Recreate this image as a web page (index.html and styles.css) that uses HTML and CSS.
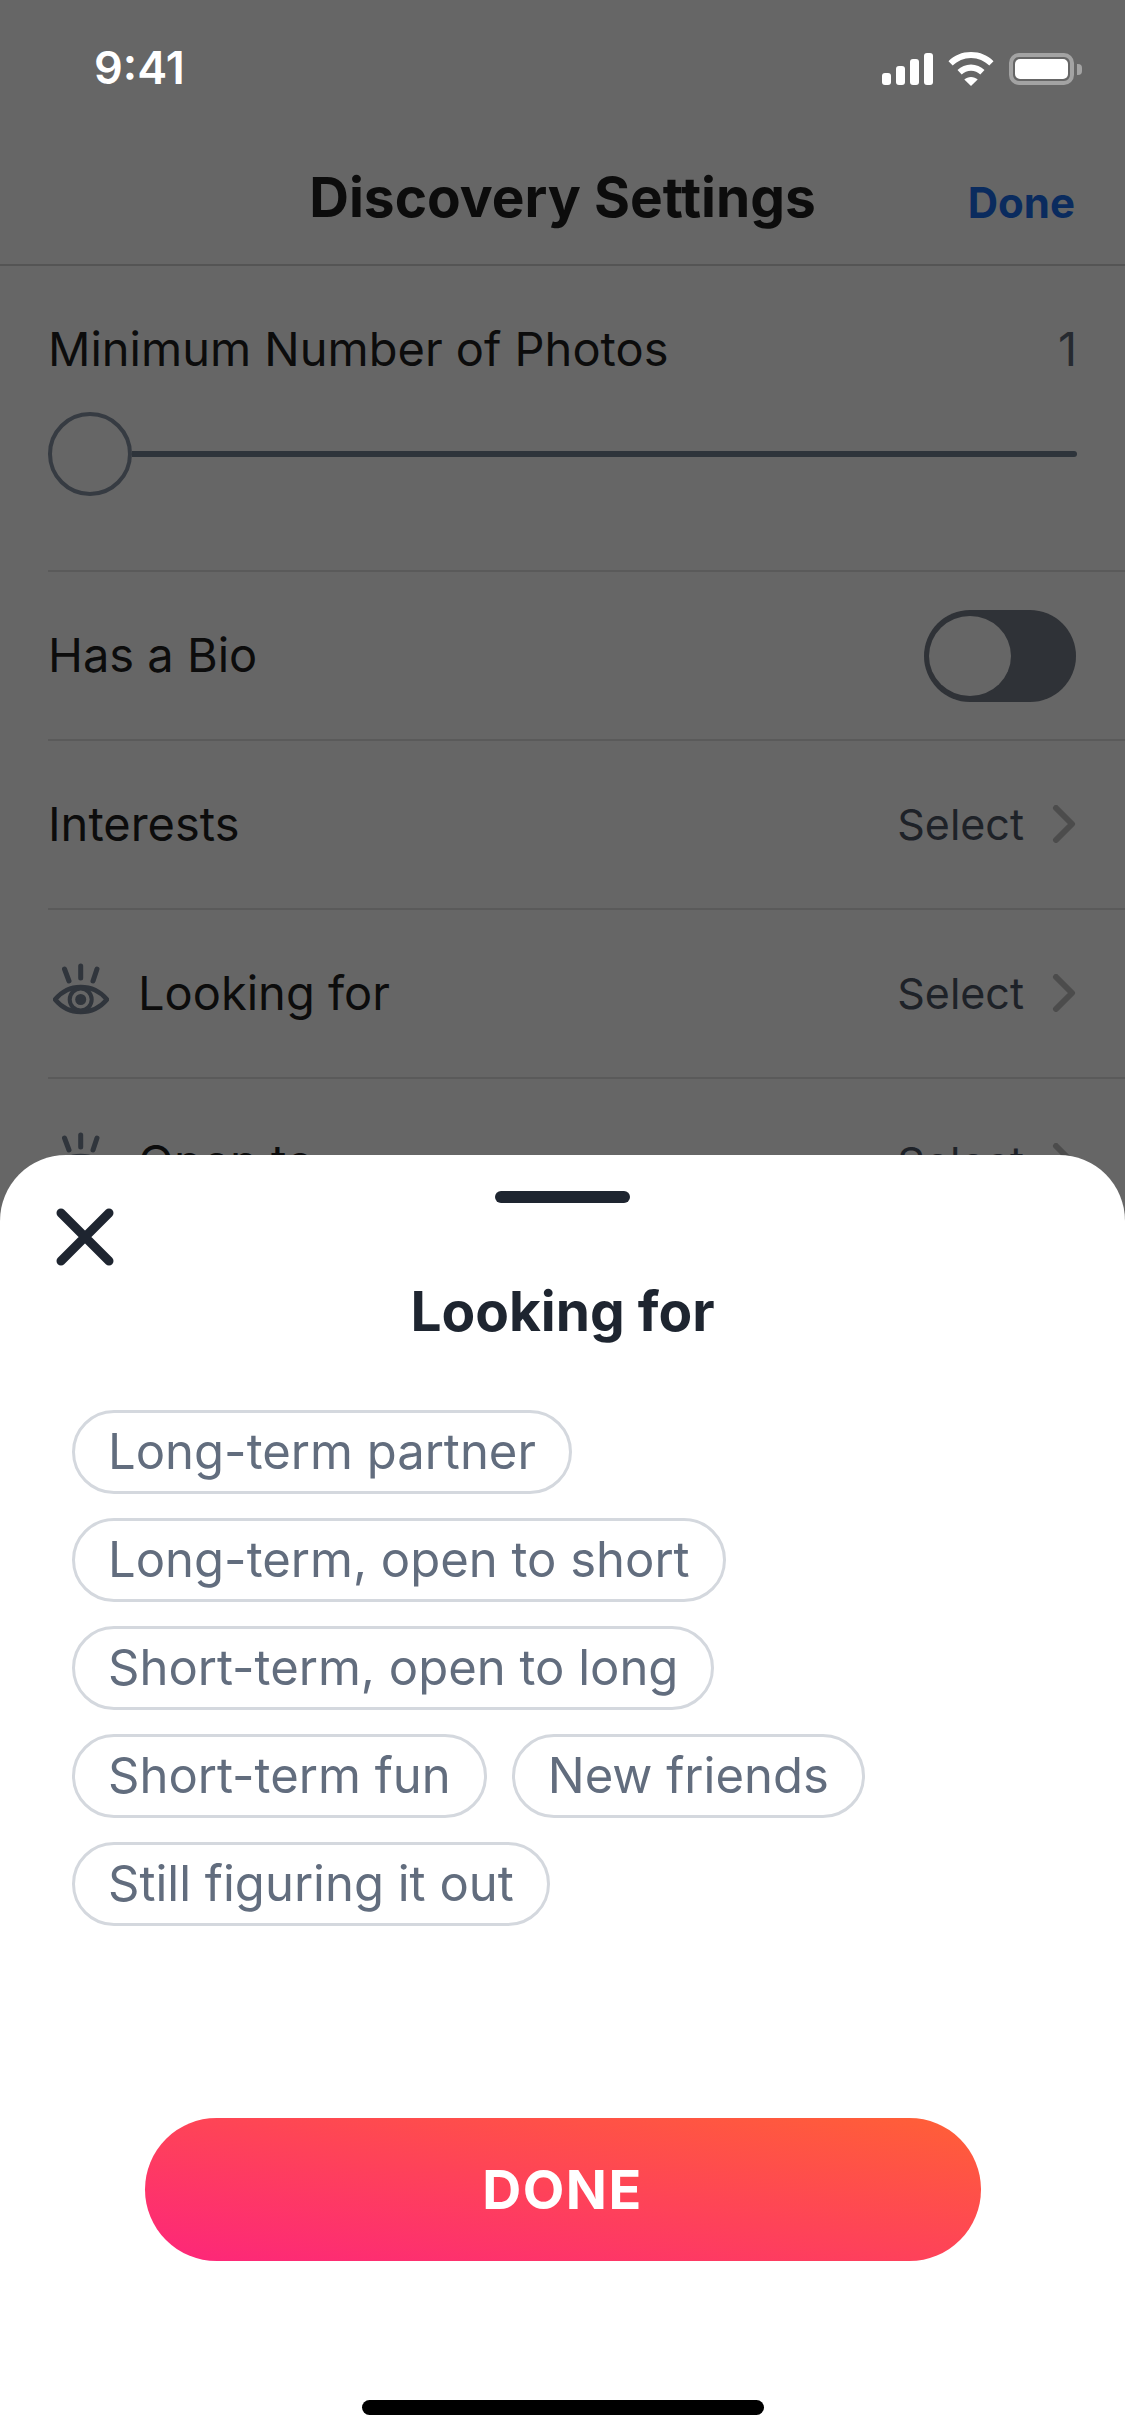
FILE: index.html
```html
<!DOCTYPE html>
<html lang="en">
<head>
  <meta charset="UTF-8">
  <meta name="viewport" content="width=device-width, initial-scale=1">
  <title>Discovery Settings</title>
  <link rel="stylesheet" href="styles.css">
</head>

<body>
  <div class="screen">

    <div class="status-bar">
      <span class="time">9:41</span>
      <div class="status-icons">
        <svg class="signal" width="51" height="32" viewBox="0 0 51 32"><rect x="0" y="20" width="9" height="12" rx="3"/><rect x="14" y="13" width="9" height="19" rx="3"/><rect x="28" y="6" width="9" height="26" rx="3"/><rect x="42" y="0" width="9" height="32" rx="3"/></svg>
        <svg class="wifi" width="46" height="34" viewBox="0 0 45 34"><path d="M22.500 0C13.500 0 5.700 3.300 0 9.200L4.200 13.600C9 8.900 15.400 6 22.500 6S36 8.900 40.800 13.600L45 9.200C39.300 3.300 31.500 0 22.500 0Z"/><path d="M22.500 12.500C17.300 12.500 12.600 14.600 9 18L13.200 22.400C15.600 20.100 18.900 18.700 22.500 18.700S29.400 20.100 31.800 22.400L36 18C32.400 14.600 27.700 12.500 22.500 12.500Z"/><path d="M22.500 25C20 25 17.600 26 15.800 27.500L22.500 34L29.200 27.500C27.400 26 25 25 22.500 25Z"/></svg>
        <div class="battery"><div class="battery-fill"></div></div>
      </div>
    </div>

    <header class="nav">
      <h1>Discovery Settings</h1>
      <a class="nav-done">Done</a>
    </header>

    <main class="settings">
      <div class="slider-row">
        <div class="slider-head"><span>Minimum Number of Photos</span><span class="count">1</span></div>
        <div class="slider"><div class="knob"></div><div class="track"></div></div>
      </div>

      <div class="row">
        <span class="label">Has a Bio</span>
        <div class="toggle"><div class="toggle-knob"></div></div>
      </div>

      <div class="row">
        <span class="label">Interests</span>
        <span class="select">Select
          <svg class="chevron" width="24" height="38" viewBox="0 0 24 38"><path d="M4 3L20 19L4 35"/></svg>
        </span>
      </div>

      <div class="row">
        <span class="label">
          <svg class="eye" width="56" height="52" viewBox="0 0 56 52"><path class="eye-rays" d="M27.700 3V15M11.500 6L16 18M44 6L40 18"/><path class="eye-lid" d="M2 36.500C10 27 19 24 27.700 24C37 24 46 27 54 36.500C46 46 37 49 27.700 49C19 49 10 46 2 36.500Z"/><circle class="eye-iris" cx="27.700" cy="36.500" r="11"/><circle cx="27.700" cy="36.500" r="5.500"/></svg>
          Looking for
        </span>
        <span class="select">Select
          <svg class="chevron" width="24" height="38" viewBox="0 0 24 38"><path d="M4 3L20 19L4 35"/></svg>
        </span>
      </div>

      <div class="row">
        <span class="label">
          <svg class="eye" width="56" height="52" viewBox="0 0 56 52"><path class="eye-rays" d="M27.700 3V15M11.500 6L16 18M44 6L40 18"/><path class="eye-lid" d="M2 36.500C10 27 19 24 27.700 24C37 24 46 27 54 36.500C46 46 37 49 27.700 49C19 49 10 46 2 36.500Z"/><circle class="eye-iris" cx="27.700" cy="36.500" r="11"/><circle cx="27.700" cy="36.500" r="5.500"/></svg>
          Open to
        </span>
        <span class="select">Select
          <svg class="chevron" width="24" height="38" viewBox="0 0 24 38"><path d="M4 3L20 19L4 35"/></svg>
        </span>
      </div>
    </main>

    <section class="sheet">
      <div class="handle"></div>
      <svg class="close" width="58" height="58" viewBox="0 0 58 58"><path d="M5 5L53 53M53 5L5 53"/></svg>
      <h2>Looking for</h2>
      <div class="pills">
        <span class="pill">Long-term partner</span>
        <span class="pill">Long-term, open to short</span>
        <span class="pill">Short-term, open to long</span>
        <span class="pill">Short-term fun</span>
        <span class="pill">New friends</span>
        <span class="pill">Still figuring it out</span>
      </div>
      <button class="done-btn">DONE</button>
      <div class="home-bar"></div>
    </section>

  </div>
</body>
</html>
```

FILE: styles.css
```css
* { margin: 0; padding: 0; box-sizing: border-box; }
body { font-family: 'Inter', sans-serif; background: #666; }
.screen { position: relative; width: 1125px; height: 2436px; overflow: hidden; background: #666; color: #0c0c0c; }

.status-bar { height: 132px; display: flex; justify-content: space-between; padding: 44px 51px 0 94px; }
.time { font-size: 45px; font-weight: 600; line-height: 48px; color: #fff; }
.status-icons { display: flex; align-items: flex-start; gap: 15px; padding-top: 9px; }
.signal { fill: #fff; }
.wifi { fill: #fff; margin-top: -1px; }
.battery { position: relative; width: 65px; height: 32px; border: 4px solid #a3a3a3; border-radius: 10px; padding: 2px; }
.battery::after { content: ''; position: absolute; right: -12px; top: 7px; width: 5px; height: 11px; background: #a3a3a3; border-radius: 0 4px 4px 0; }
.battery-fill { height: 100%; background: #fff; border-radius: 5px; }

.nav { position: relative; height: 134px; display: flex; justify-content: center; border-bottom: 2px solid #545454; }
.nav h1 { font-size: 55px; font-weight: 700; line-height: 64px; margin-top: 33px; }
.nav-done { position: absolute; right: 50px; top: 46px; font-size: 42px; font-weight: 700; line-height: 50px; color: #0a2b5e; }

.settings { padding-left: 48px; font-size: 47px; }
.slider-row { height: 306px; border-bottom: 2px solid #5a5a5a; padding: 55px 48px 0 0; }
.slider-head { display: flex; justify-content: space-between; line-height: 56px; }
.count { color: #262a30; }
.slider { display: flex; align-items: center; margin-top: 35px; }
.knob { width: 84px; height: 84px; border: 4px solid #363b42; border-radius: 50%; }
.track { flex: 1; height: 6px; background: #2e343b; border-radius: 0 3px 3px 0; }

.row { height: 169px; display: flex; align-items: center; justify-content: space-between; padding-right: 49px; padding-bottom: 2px; border-bottom: 2px solid #5a5a5a; }
.label { display: flex; align-items: center; gap: 29px; }
.toggle { width: 152px; height: 92px; margin-top: 2px; background: #2f3237; border-radius: 46px; padding: 6px 5px; }
.toggle-knob { width: 82px; height: 80px; background: #666; border-radius: 50%; }
.select { display: flex; align-items: center; gap: 28px; font-size: 43px; color: #1e2228; }
.chevron { fill: none; stroke: #4c4c4c; stroke-width: 6; stroke-linecap: round; stroke-linejoin: round; }
.eye { margin-left: 5px; margin-top: -8px; fill: #30353c; }
.eye-rays { fill: none; stroke: #30353c; stroke-width: 5; stroke-linecap: round; }
.eye-lid { fill: none; stroke: #30353c; stroke-width: 4.500; }
.eye-iris { fill: none; stroke: #30353c; stroke-width: 4; }

.sheet { position: absolute; left: 0; right: 0; top: 1155px; bottom: 0; background: #fff; border-radius: 66px 66px 0 0; display: flex; flex-direction: column; align-items: center; }
.handle { width: 135px; height: 12px; margin-top: 36px; background: #1e2530; border-radius: 6px; }
.close { align-self: flex-start; margin: 5px 0 0 56px; fill: none; stroke: #1e2530; stroke-width: 9; stroke-linecap: round; }
.sheet h2 { font-size: 55px; font-weight: 700; line-height: 60px; margin-top: 15px; color: #1e2530; }
.pills { align-self: stretch; display: flex; flex-wrap: wrap; align-content: flex-start; gap: 24px 25px; height: 514px; margin-top: 69px; padding: 0 50px 0 72px; }
.pill { height: 84px; line-height: 78px; padding: 0 33px; border: 3px solid #d4d8de; border-radius: 42px; font-size: 49px; color: #626d7e; white-space: nowrap; }
.done-btn { width: 836px; height: 143px; margin-top: 194px; border: none; border-radius: 72px; background: linear-gradient(to top right, #fd267a, #ff6036); color: #fff; font-family: inherit; font-size: 54px; font-weight: 700; letter-spacing: 1.500px; }
.home-bar { width: 402px; height: 15px; margin-top: 139px; background: #000; border-radius: 8px; }
```
